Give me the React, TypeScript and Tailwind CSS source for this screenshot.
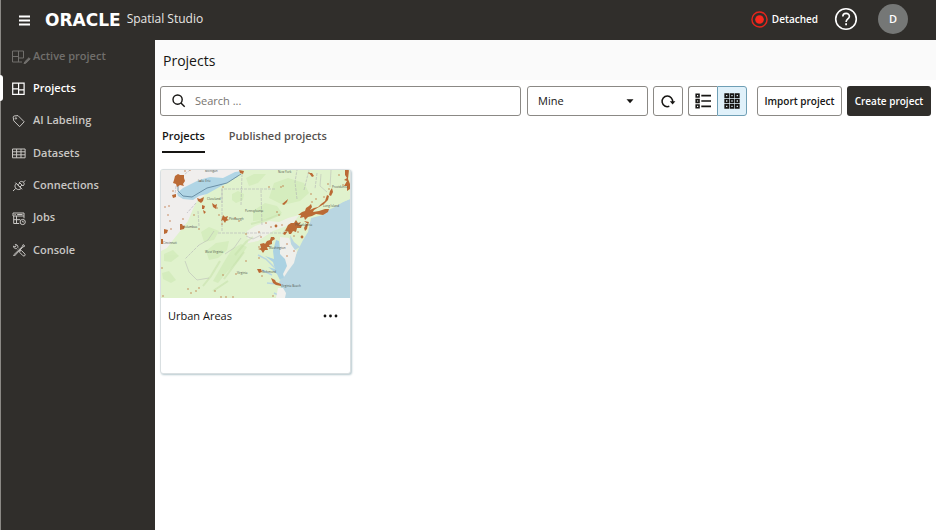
import { useState, type ReactNode } from "react";

const navItems = [
  { label: "Active project", icon: <ActiveIcon /> },
  { label: "Projects", icon: <ProjectsIcon /> },
  { label: "AI Labeling", icon: <TagIcon /> },
  { label: "Datasets", icon: <TableIcon /> },
  { label: "Connections", icon: <PlugIcon /> },
  { label: "Jobs", icon: <JobsIcon /> },
  { label: "Console", icon: <ToolsIcon /> },
];

export default function App() {
  const [tab, setTab] = useState("Projects");
  const [view, setView] = useState("grid");

  return (
    <div className="flex min-h-screen flex-col bg-white font-['Open_Sans','Noto_Sans',sans-serif] text-[11px] text-[#161513]">
      {/* Header */}
      <header className="flex h-10 items-center border-l border-[#8b8985] bg-[#302e2b] pr-7 pl-4 text-white">
        <button type="button" aria-label="Menu" className="mr-3 flex size-4 items-center justify-center">
          <svg viewBox="0 0 16 16" className="size-4" stroke="currentColor" strokeWidth="2">
            <path d="M2 4.5h11M2 8.5h11M2 12.5h11" />
          </svg>
        </button>
        <span className="font-['DejaVu_Sans',sans-serif] text-[17px] leading-5 font-bold">ORACLE</span>
        <span className="ml-1.5 pb-0.5 text-[12px] leading-4 text-[#e8e6e3]">Spatial Studio</span>

        <div className="ml-auto flex items-center pb-0.5">
          <svg viewBox="0 0 18 18" className="mr-1 size-[17px]" fill="none">
            <circle cx="9" cy="9" r="8" stroke="#e3261d" strokeWidth="1.5" />
            <circle cx="9" cy="9" r="4.6" fill="#f8281e" />
          </svg>
          <span className="text-[10px] font-semibold">Detached</span>
          <button type="button" aria-label="Help" className="ml-4">
            <svg viewBox="0 0 24 24" className="size-6" fill="none" stroke="currentColor" strokeWidth="1.6">
              <circle cx="12" cy="12" r="10.3" />
              <path d="M8.8 9.6c0-4.3 6.6-4.1 6.6-.3 0 2.6-3.3 2.7-3.3 5.6" />
              <path d="M12.1 16.3v1.9" strokeWidth="1.8" />
            </svg>
          </button>
          <button
            type="button"
            aria-label="Account"
            className="ml-5 flex size-[30px] items-center justify-center rounded-full bg-[#757776] text-[11px] font-semibold"
          >
            D
          </button>
        </div>
      </header>

      <div className="flex flex-1">
        {/* Sidebar */}
        <aside className="w-[155px] shrink-0 border-l border-[#8b8985] bg-[#302e2b]">
          <nav className="flex h-[226px] flex-col">
            {navItems.map((item) => (
              <NavItem key={item.label} label={item.label} icon={item.icon} />
            ))}
          </nav>
        </aside>

        <main className="min-w-0 flex-1">
          <div className="flex h-10 items-center bg-[#fafafa] px-2">
            <h1 className="text-[14px]">Projects</h1>
          </div>

          {/* Toolbar */}
          <div className="flex items-center px-[5px] pt-1.5">
            <label className="flex h-[30px] min-w-0 flex-1 items-center rounded-[3px] border border-[#8b8985] px-2.5">
              <svg viewBox="0 0 16 16" className="mr-2 size-4 shrink-0" fill="none" stroke="#161513" strokeWidth="1.4">
                <circle cx="6.6" cy="6.6" r="4.6" />
                <path d="m9.9 9.9 3.8 3.8" />
              </svg>
              <input
                type="text"
                aria-label="Search projects"
                placeholder="Search ..."
                className="min-w-0 flex-1 bg-transparent outline-none placeholder:text-[#77736f]"
              />
            </label>

            <div className="relative ml-1.5 w-[121px]">
              <select
                aria-label="Owner"
                className="h-[30px] w-full appearance-none rounded-[3px] border border-[#8b8985] bg-white pl-2.5 font-medium"
              >
                <option>Mine</option>
                <option>All</option>
              </select>
              <svg viewBox="0 0 8 5" className="pointer-events-none absolute top-[13px] right-[14px] h-[5px] w-2">
                <path d="M.5.3h7L4 4.2z" fill="#161513" />
              </svg>
            </div>

            <button
              type="button"
              aria-label="Refresh"
              className="ml-[5px] flex size-[30px] items-center justify-center rounded-[3px] border border-[#8b8985]"
            >
              <svg viewBox="0 0 16 16" className="size-4" fill="none" stroke="#161513" strokeWidth="1.5">
                <path d="M9.3 13.3A5.3 5.3 0 1 1 12.6 9.2" />
                <path d="M9.8 8.2h5.6l-2.8 3.3z" fill="#161513" stroke="none" />
              </svg>
            </button>

            <div className="ml-[5px] flex h-[30px]">
              <button
                type="button"
                aria-label="List view"
                aria-pressed={view === "list"}
                onClick={() => setView("list")}
                className="flex w-[29px] items-center justify-center rounded-l-[3px] border border-r-0 border-[#8b8985]"
              >
                <svg viewBox="0 0 16 16" className="size-4" fill="none" stroke="#161513" strokeWidth="1.6">
                  <path d="M1.2 1.2h2.8v2.8H1.2zM1.2 6.6h2.8v2.8H1.2zM1.2 12h2.8v2.8H1.2zM6.3 2.6H16M6.3 8H16M6.3 13.4H16" />
                </svg>
              </button>
              <button
                type="button"
                aria-label="Grid view"
                aria-pressed={view === "grid"}
                onClick={() => setView("grid")}
                className="flex w-[30px] items-center justify-center rounded-r-[3px] border border-[#6f9fb5] bg-[#e0f1fa]"
              >
                <svg viewBox="0 0 16 16" className="size-4" fill="none" stroke="#161513" strokeWidth="1.7">
                  <path d="M1.2 1.2h3v3h-3zM6.5 1.2h3v3h-3zM11.8 1.2h3v3h-3zM1.2 6.5h3v3h-3zM6.5 6.5h3v3h-3zM11.8 6.5h3v3h-3zM1.2 11.8h3v3h-3zM6.5 11.8h3v3h-3zM11.8 11.8h3v3h-3z" />
                </svg>
              </button>
            </div>

            <button
              type="button"
              className="ml-2.5 h-[30px] w-[85px] rounded-[3px] border border-[#8b8985] text-[10px] font-semibold whitespace-nowrap"
            >
              Import project
            </button>
            <button
              type="button"
              className="ml-[5px] h-[30px] w-[84px] rounded-[3px] bg-[#302e2b] text-[10px] font-semibold whitespace-nowrap text-white"
            >
              Create project
            </button>
          </div>

          {/* Tabs */}
          <div role="tablist" className="flex gap-6 px-[7px] pt-1.5">
            {["Projects", "Published projects"].map((name) => (
              <button
                key={name}
                type="button"
                role="tab"
                aria-selected={tab === name}
                onClick={() => setTab(name)}
                className={`h-[31px] border-b-2 font-semibold ${
                  tab === name ? "border-[#161513] text-[#161513]" : "border-transparent text-[#57534f]"
                }`}
              >
                {name}
              </button>
            ))}
          </div>

          <div className="px-[5px] pt-4">
            <ProjectCard name="Urban Areas" />
          </div>
        </main>
      </div>
    </div>
  );
}

function NavItem({ label, icon }: { label: string; icon: ReactNode }) {
  const active = label === "Projects";
  const disabled = label === "Active project";
  return (
    <a
      href="#"
      aria-disabled={disabled}
      className={`relative flex flex-1 items-center pl-2.5 font-semibold ${
        active ? "text-white" : disabled ? "text-[#716f6c]" : "text-[#c9c7c4]"
      }`}
    >
      {active && <span className="absolute top-[3px] -left-px h-[26px] w-[3px] rounded-r-sm bg-white" />}
      <span className="w-[22px] shrink-0">{icon}</span>
      {label}
    </a>
  );
}

function Icon({ children }: { children: ReactNode }) {
  return (
    <svg viewBox="0 0 16 16" className="size-4" fill="none" stroke="currentColor" strokeWidth="1">
      {children}
    </svg>
  );
}

function ActiveIcon() {
  return (
    <svg viewBox="0 0 20 16" className="h-4 w-5" fill="none" stroke="currentColor" strokeWidth="1">
      <path d="M12.5 10V3h-11v11h9.5M7.5 3v11M1.5 8.5h6M7.5 10h5" />
      <path d="m13 15.8.8-2 4.2-4.1 1.2 1.2-4.1 4.1z" fill="currentColor" />
    </svg>
  );
}

function ProjectsIcon() {
  return (
    <Icon>
      <path d="M1.7 3.2h11.4v11.2H1.7zM7.6 3.2v11.2M1.7 8.8h5.9M7.6 9.8h5.5" strokeWidth="1.2" />
    </Icon>
  );
}

function TagIcon() {
  return (
    <Icon>
      <path d="M2.2 4.2c0-.7.4-1.1 1-1.2L7 2.6l6.2 6.2-4.6 4.9-5.8-5.8z" strokeLinejoin="round" />
      <circle cx="4.9" cy="5.4" r=".7" />
    </Icon>
  );
}

function TableIcon() {
  return (
    <Icon>
      <path d="M1.5 4h12.6v8.8H1.5zM1.5 6.8h12.6M1.5 9.8h12.6M5.6 4v8.8M10 4v8.8" />
    </Icon>
  );
}

function PlugIcon() {
  return (
    <Icon>
      <path d="m2 14 2.8-2.6M4.9 11.4c-1.6-1.7-1-3.6.4-5l5 5c-1.5 1.4-3.6 1.7-5.4 0zM4.4 5.6l6.7 6.7M6.9 7.9l2-2M9 10l2-2" />
      <path d="m8 5 3.9 4c1.5-1.2 1.6-2.6.7-3.6S9.500 3.800 8.600 5.400M12.400 5.200l1.800-1.800" />
    </Icon>
  );
}

function JobsIcon() {
  return (
    <Icon>
      <path d="M13 8.300V3H2v3h11M2.700 6v7.500h5.500M2.700 9.700h6.500M5.500 6v7.500M3.500 4.500h1.200M6.200 4.500h5.300" />
      <circle cx="11.700" cy="12" r="2.600" />
      <path d="M11.700 10.700V12h1.100" />
    </Icon>
  );
}

function ToolsIcon() {
  return (
    <Icon>
      <path d="m6.300 7.300-.7-.7c-1.600.3-3.100-.7-3.100-2.500l1.500 1 1.300-1.200-1-1.500c1.800 0 3 1.400 2.500 3.100l.8.8M8.900 8.700l1.700-.1 3.400 3.600c.6 1.200-.8 2.400-1.900 1.600L8.700 10.400z" />
      <path d="m2.500 13.100 8.800-8.500.9-2 1.600 1.400-2 1.100-8.400 8.900z" />
    </Icon>
  );
}

function ProjectCard({ name }: { name: string }) {
  return (
    <article className="h-[205px] w-[191px] overflow-hidden rounded-[3px] border border-[#d9dfe1] bg-white shadow-[1px_1px_2px_#b8c9cf]">
      <MapThumbnail />
      <div className="flex h-9 items-center justify-between pr-3 pl-[7px]">
        <h2 className="font-medium">{name}</h2>
        <button type="button" aria-label="Project actions" className="flex h-4 items-center">
          <svg viewBox="0 0 15 4" className="h-1 w-[15px]" fill="#161513">
            <circle cx="2" cy="2" r="1.4" />
            <circle cx="7.5" cy="2" r="1.4" />
            <circle cx="13" cy="2" r="1.4" />
          </svg>
        </button>
      </div>
    </article>
  );
}

// x, y, radius
const towns = [
  [24, 1, 1], [29, 0, 1], [39, 11, 1], [8, 36, 1], [4, 37, 1], [12, 21, 1], [22, 49, 1], [33, 45, 1],
  [9, 51, 1], [7, 45, 1], [38, 59, 1], [10, 59, 1], [56, 38, 1], [58, 45, 1], [61, 54, 1], [78, 51, 1],
  [74, 48, 1], [62, 17, 1], [108, 17, 1], [120, 17, 1], [122, 16, 1], [110, 57, 1], [115, 56, 2],
  [105, 53, 1], [121, 55, 1], [118, 45, 1], [116, 42, 1], [98, 62, 1], [100, 67, 1], [85, 64, 1],
  [98, 77, 1], [126, 74, 1], [126, 86, 1], [133, 81, 1], [98, 88, 1], [85, 91, 1], [62, 105, 1],
  [75, 104, 1], [101, 106, 1], [27, 119, 1], [30, 123, 1], [38, 118, 1], [35, 121, 1], [60, 127, 1],
  [65, 127, 1], [72, 127, 1], [54, 121, 1], [150, 24, 1], [155, 29, 1], [151, 32, 1], [167, 14, 1],
  [168, 19, 1], [163, 27, 1], [178, 5, 1], [182, 15, 1], [148, 3, 1], [141, 67, 2], [137, 62, 1],
  [133, 66, 1], [1, 98, 1], [2, 126, 1], [112, 126, 1],
];

function MapThumbnail() {
  return (
    <svg viewBox="0 0 189 128" className="block h-32 w-full" role="img" aria-label="Map of urban areas">
      <rect width="189" height="128" fill="#e0f2cd" />
      {/* Unshaded land */}
      <path d="M0 0h80L50 20 36 31l-4 8-5 12-7 9-8 10-6 8-6 3z" fill="#f0eeed" />
      <path d="M86 61l8-5 14-5 10 1 9-4 11-3-6 9-9 3-11 4-15 10-10 2z" fill="#eef0e6" />
      {/* Forest */}
      <g fill="#cde9b4" opacity=".6">
        <path d="M113 13l14-5 16 5 5 10-9 8-17 4-14-7zM85 8l8-4h12l-8 9-9 3z" />
        <path d="M71 24l6-3 6 3-1 6-7 3-4-3zM40 62l8-5 10 4-5 9-10 2z" />
        <path d="M63 92l8-13 9-5 6 3-9 14-11 11-9 11-5-2zM45 81l10-8 13-2-2 9-9 8-9 2z" />
        <path d="M3 84l9-4 6 6-8 6-7-1zM1 103l7-2 7 9-5 3-8-4z" />
        <path d="M92 41l12-8 12 3 5 7-12 6-17 2z" />
      </g>
      <path d="M52 121l15-10M63 109l20-27M42 116l8-10 9-15M74 85l11-13 7-5M90 54l15-4 15-6" fill="none" stroke="#c3dfa8" strokeWidth="2" opacity=".5" />
      {/* Atlantic and bays */}
      <path d="M189 29l-7 3-8 5-9 4-3 4-12 3-3 14-5 8-5 10-5 12-5 8-5 7-4 5 3 8 1 8h67z" fill="#b9d6e1" />
      <path d="M189 24v5l-12 5-10 3 8-7z" fill="#e0f2cd" />
      <path d="M115 70l3 1 1 8 4 8 7 5-3 8-4 7-4 3-3-6-9-7 7 2-2-7-8-6 9 3-1-8z" fill="#abd2e2" />
      <path d="M119 67l9 1 3 8 5 5-3 12-6 8-4 6-1-3 4-8-2-7-5-5z" fill="#efefeb" />
      <path d="M129 65l4 7 6 5-5 3-4-6z" fill="#b9d6e1" />
      <path d="M97 85l8 4 9 9M101 100l10 5M106 113l10 1M113 123l8 4" stroke="#b9d6e1" strokeWidth="1.5" fill="none" />
      <path d="M117 118l5 0 3 5-1 5h-9z" fill="#f2f1ee" />
      {/* Lake Erie */}
      <path d="M16 23l6-5 16-8 11-3 13 1 12-6 7-1-5 6-14 8-16 9-8 2-6 4-10-1-5-3z" fill="#b0d5e5" />
      <path d="M17 15v6l5 5 9 1 15-9 20-5 14-9" fill="none" stroke="#587e96" strokeWidth=".8" />
      <path d="M24 4l5-4M15 16l-1 9M35 33l-9 10M61 18v43M38 75l-8 8-6 6M57 63h64M63 19h52M61 19v14M81 4l-1 31M100 20l1 36M136 29l-2-17 2-12M143 20l5-20M156 3l-2 16M38 56l-1-15" fill="none" stroke="#a9a6b1" strokeWidth=".5" strokeDasharray="3 1" />
      <path d="M38 75l9-5 6-9M24 91l4 11 8 8 12-2M85 66l7 3 8-4M170 0l-1 17M121 64l5-6M80 68l-7 10-9 6M160 4l-1 12 7 6" fill="none" stroke="#b5b5b5" strokeWidth=".5" />
      {/* Urban areas */}
      <g fill="#bb6a35">
        <path d="M14 6l3-2 2 1 4 0v3l1 3-2 3 1 2-4-1-3 2-1-3-3-1 1-3zM11 25l4-1v3l-3 1zM36 28l3 1 4-2-1 4-2 2-3-2zM41 35l3 1-1 3-2 0zM42 40l3 2-2 2zM51 33l3 2 2-1-1 5-3-2z" />
        <path d="M62 45l2 2 3-1-1 3 2 1-3 1-1 2-2-3-2 1 1-3zM19 54h2l1 2h2l-1 3-4 1zM3 59l4 1-1 3-3 1zM0 69h2v5H0zM78 0l5 1-1 3-3-1zM148 3l3 0 2 3-2 1z" />
        <path d="M141 42l3-1 1-3 3-2 2-2 1 3-2 3 4-2 4-1 3-3 4-3 2-6 2 1-1 4-4 4-5 3-5 3-1 2 6-1 6-2h4l-1 3-5 3-7-1-4 2-4 1-3 3-1-3-4 1 1-3-3 0z" />
        <path d="M127 55l3-2 3 0 2-3 2 3 3-1-2 3 3 0-1 3-4 0-1 4-3-1-2 3-2 0-1-3-3 0zM123 62l4-1-3 4-2-1zM145 54h2l-1 5-2 2-1-3zM143 51l5 1-1 2z" />
        <path d="M99 74l4-1 1 1 2-3 3-1 1-3 3 0 1 2-3 2 0 3-3 1 1 2-3 0 1 3-3 0-2 3-2-3-3-1 3-1zM96 99l4 0 1 3-3 1zM110 108l4 2 1 2 5 2v2l-5-1-3-2zM169 21l2-3 1 4-2 4-2-1zM184 0h4l-1 9 2 5v5l-3 2 0-5-3 0 3-5-3-1 3-2-2-3zM121 34l6-5-1 3-3 3z" />
        {towns.map(([x, y, r]) => (
          <circle key={`${x}-${y}`} cx={x} cy={y} r={r * 0.7} />
        ))}
      </g>
      <g fill="#4c5148" fontSize="3">
        <text x="117" y="3">New York</text>
        <text x="44" y="2">Michigan</text>
        <text x="37" y="12">Lake Erie</text>
        <text x="46" y="30">Cleveland</text>
        <text x="22" y="58">Columbus</text>
        <text x="2" y="74">Cincinnati</text>
        <text x="84" y="42">Pennsylvania</text>
        <text x="68" y="50">Pittsburgh</text>
        <text x="44" y="83">West Virginia</text>
        <text x="76" y="104">Virginia</text>
        <text x="108" y="79">Washington</text>
        <text x="101" y="103">Richmond</text>
        <text x="120" y="117">Virginia Beach</text>
        <text x="134" y="56">Philadelphia</text>
        <text x="162" y="37">Long Island</text>
        <text x="171" y="18">Providence</text>
      </g>
    </svg>
  );
}
